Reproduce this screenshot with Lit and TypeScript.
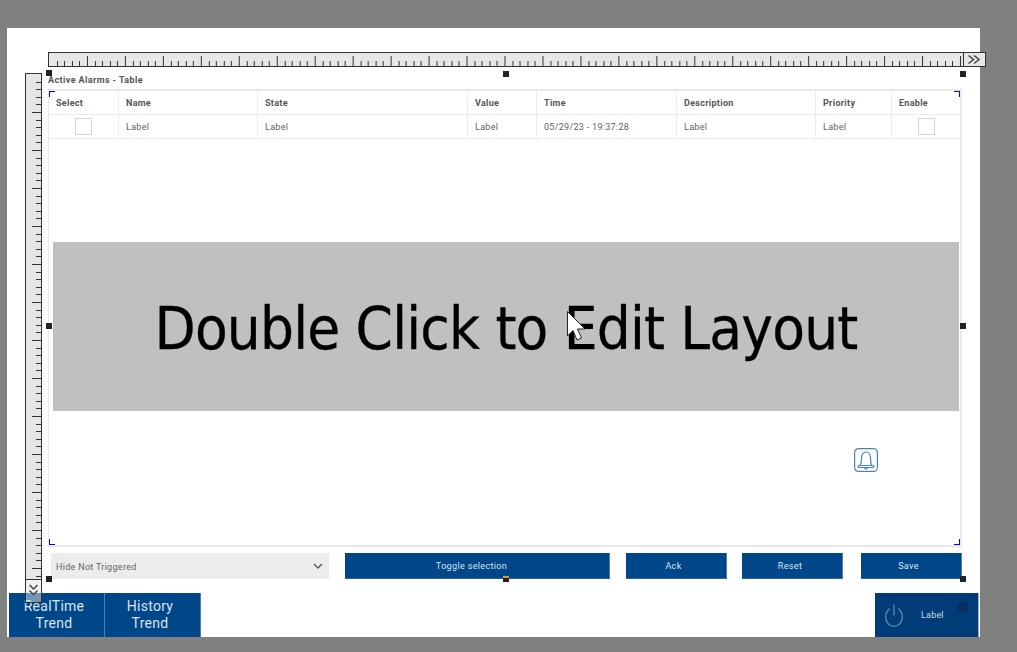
import { LitElement, html, css, svg } from "lit";
import { customElement } from "lit/decorators.js";

const COLS = ["Select", "Name", "State", "Value", "Time", "Description", "Priority", "Enable"];
const ROW = [null, "Label", "Label", "Label", "05/29/23 - 19:37:28", "Label", "Label", null];

function ticksH(len: number) {
  const out = [];
  const n = Math.floor(len / 7.6);
  for (let i = 1; i <= n; i++) {
    const x = Math.round(i * 7.6) + 0.5;
    out.push(svg`<line x1=${x} x2=${x} y1=${i % 5 === 0 ? 4 : 9} y2="14" />`);
  }
  return out;
}
function ticksV(len: number) {
  const out = [];
  const n = Math.floor(len / 7.6);
  for (let i = 1; i <= n; i++) {
    const y = Math.round(i * 7.6) + 0.5;
    out.push(svg`<line y1=${y} y2=${y} x1=${i % 5 === 0 ? 6 : 10} x2="15" />`);
  }
  return out;
}

@customElement("app-root")
export class AppRoot extends LitElement {
  static styles = css`
    :host { display: block; width: 1017px; height: 652px; background: #808080; overflow: hidden; font-family: Roboto, "Liberation Sans", sans-serif; }
    .stage { padding: 28px 37px 15px 7px; height: 652px; box-sizing: border-box; }
    .canvas { position: relative; height: 609px; background: #fff; display: flex; flex-direction: column; padding: 45px 0 0 0; box-sizing: border-box; }

    .widget { margin-left: 41px; width: 914px; display: flex; flex-direction: column; }
    .title { height: 16px; font-size: 9px; font-weight: 700; color: #555; line-height: 13px; padding-top: 1px; box-sizing: border-box; letter-spacing: .4px; }
    .frame { position: relative; height: 458px; border: 2px solid #e9e9e9; box-sizing: border-box; border-left-width: 1px; display: flex; flex-direction: column; }
    .grid { display: grid; grid-template-columns: 70px 139px 210px 69px 140px 139px 76px 69px; }
    .cell { height: 24px; border-right: 1px solid #ededed; border-bottom: 1px solid #ededed; box-sizing: border-box; font-size: 9px; color: #5f5f5f; display: flex; align-items: center; padding-left: 7px; letter-spacing: .3px; }
    .cell:nth-child(8n) { border-right: none; }
    .head { font-weight: 700; color: #555; }
    .cell.check { justify-content: center; padding-left: 0; }
    .box { width: 17px; height: 17px; border: 1px solid #d5d5d5; box-sizing: border-box; background: #fff; }
    .slot { height: 169px; margin: 103px 1px 0 4px; background: #c0c0c0; color: #000; display: flex; align-items: center; justify-content: center; font-family: "DejaVu Sans Condensed", "DejaVu Sans", sans-serif; font-stretch: condensed; font-size: 59.5px; letter-spacing: -.8px; -webkit-text-stroke: .3px #000; line-height: 1; white-space: nowrap; padding-top: 4px; box-sizing: border-box; }
    .corner { position: absolute; width: 6px; height: 6px; border: 0 solid #0000ff; box-sizing: border-box; }
    .corner.tl { left: 0; top: 0; border-width: 1px 0 0 1px; }
    .corner.tr { right: 0; top: 0; border-width: 1px 1px 0 0; }
    .corner.bl { left: 0; bottom: 0; border-width: 0 0 1px 1px; }
    .corner.br { right: 0; bottom: 0; border-width: 0 1px 1px 0; }
    .bell { position: absolute; left: 805px; top: 357px; width: 24px; height: 24px; }

    .controls { display: flex; height: 26px; margin-top: 6px; padding-left: 3px; }
    .select { width: 278px; background: #ececec; color: #666; font-size: 9px; letter-spacing: .3px; display: flex; align-items: center; justify-content: space-between; padding: 1px 6px 0 5px; box-sizing: border-box; }
    .select svg { width: 10px; height: 6px; margin-top: -1px; }
    .btn { background: #004789; border-right: 1px solid #4d7eac; border-bottom: 1px solid #2a639b; box-sizing: border-box; color: #d9e4ef; font-size: 9px; letter-spacing: .35px; display: flex; align-items: center; justify-content: center; padding-right: 5px; }
    .b1 { width: 265px; margin-left: 16px; padding-right: 11px; }
    .b2 { width: 101px; margin-left: 16px; }
    .b3 { width: 101px; margin-left: 15px; padding-right: 4px; }
    .b4 { width: 101px; margin-left: 18px; }

    .nav { display: flex; height: 44px; margin-top: 14px; padding-left: 2px; padding-right: 1px; justify-content: space-between; }
    .tabs { display: flex; }
    .tab { width: 96px; background: #004789; border-right: 1px solid #4d7eac; box-sizing: border-box; color: #d9e4ef; font-size: 14px; line-height: 17px; display: flex; align-items: center; justify-content: center; text-align: center; letter-spacing: .25px; padding-right: 5px; }
    .power { position: relative; width: 104px; background: #003d78; border-right: 1px solid #aab; box-sizing: border-box; color: #cdd9e6; font-size: 9px; letter-spacing: .2px; display: flex; align-items: center; padding-left: 10px; }
    .power svg { width: 18px; height: 23px; }
    .power span { margin-left: 18px; }
    .led { position: absolute; right: 9px; top: 8px; width: 12px; height: 12px; border-radius: 50%; background: #053060; }

    .ruler { position: absolute; background: #e6e6e6; border: 1px solid #333; box-sizing: border-box; }
    .ruler svg { display: block; stroke: #333; stroke-width: 1; }
    .rh { left: 41px; top: 24px; width: 938px; height: 15px; display: flex; justify-content: space-between; }
    .rh .more { width: 22px; height: 13px; border-left: 1px solid #333; box-sizing: border-box; flex: none; }
    .rv { left: 18px; top: 45px; width: 17px; height: 530px; background: transparent; display: flex; flex-direction: column; }
    .rv > svg { background: #e6e6e6; flex: none; }
    .rv .more { flex: 1; border-top: 1px solid #333; background: rgba(230,230,230,.5); }
    .ruler .more svg { stroke: #444; fill: none; stroke-width: 1.5; }

    .h { position: absolute; width: 6px; height: 6px; background: #222; }
    .h.orange { border-top: 2px solid #e2913f; height: 4px; }
    .cursor { position: absolute; left: 560px; top: 283px; width: 20px; height: 32px; }
  `;

  render() {
    const handles: [number, number, boolean][] = [
      [39, 42, false], [496, 43, false], [953, 43, false],
      [39, 295, false], [953, 295, false],
      [39, 548, false], [496, 548, true], [953, 548, false],
    ];
    return html`
      <div class="stage">
        <div class="canvas">
          <div class="widget">
            <div class="title">Active Alarms - Table</div>
            <div class="frame">
              <div class="grid">
                ${COLS.map((c) => html`<div class="cell head">${c}</div>`)}
                ${ROW.map((c) => c === null
                  ? html`<div class="cell check"><div class="box"></div></div>`
                  : html`<div class="cell">${c}</div>`)}
              </div>
              <div class="slot">Double Click to Edit Layout</div>
              <i class="corner tl"></i><i class="corner tr"></i><i class="corner bl"></i><i class="corner br"></i>
              <svg class="bell" viewBox="0 0 24 24" fill="none" stroke="#4a83b5" stroke-width="1.2">
                <rect x=".6" y=".6" width="22.8" height="22.8" rx="4" />
                <path d="M6 17.500C7.500 15.500 7.500 13 7.500 10.500 7.500 6.500 9.500 4 12 4s4.500 2.500 4.500 6.500c0 2.500 0 5 1.500 7" />
                <path d="M5 17.500h14a1 1 0 0 1 0 2H5a1 1 0 0 1 0-2z" />
                <path d="M10.500 19.500c0 1.800 3 1.800 3 0" />
              </svg>
            </div>
            <div class="controls">
              <div class="select">Hide Not Triggered
                <svg viewBox="0 0 10 6" fill="none" stroke="#555" stroke-width="1.4"><path d="M1 1l4 4 4-4"/></svg>
              </div>
              <div class="btn b1">Toggle selection</div>
              <div class="btn b2">Ack</div>
              <div class="btn b3">Reset</div>
              <div class="btn b4">Save</div>
            </div>
          </div>
          <div class="nav">
            <div class="tabs">
              <div class="tab">RealTime<br />Trend</div>
              <div class="tab">History<br />Trend</div>
            </div>
            <div class="power">
              <svg viewBox="0 0 18 23" fill="none" stroke="#6f8fb2" stroke-width="1.2">
                <path d="M9 .5v11" />
                <path d="M5 4.500C2.500 6.300 .7 9 .7 13c0 5.300 3.700 9.400 8.300 9.400s8.300-4.100 8.300-9.400c0-4-1.800-6.700-4.300-8.500" />
              </svg>
              <span>Label</span>
              <i class="led"></i>
            </div>
          </div>

          <div class="ruler rh">
            <svg width="915" height="13" viewBox="0 1 915 13">${ticksH(915)}</svg>
            <div class="more">
              <svg width="21" height="13" viewBox="0 0 21 13"><path d="M4.500 2.500l5 4-5 4 M10 2.500l5 4-5 4" /></svg>
            </div>
          </div>
          <div class="ruler rv">
            <svg width="15" height="505" viewBox="0 0 15 505">${ticksV(505)}</svg>
            <div class="more">
              <svg width="15" height="22" viewBox="0 0 15 22"><path d="M3.500 5l4 4 4-4 M3.500 10.500l4 4 4-4" /></svg>
            </div>
          </div>
          ${handles.map(([x, y, o]) => html`<i class="h ${o ? "orange" : ""}" style="left:${x}px;top:${y}px"></i>`)}
          <svg class="cursor" viewBox="0 0 20 32">
            <path d="M.5.500V25l5.500-5.500 4 9.500 4.500-2-4-9h7.500z" fill="#fff" stroke="#222" stroke-width="1" />
          </svg>
        </div>
      </div>
    `;
  }
}
